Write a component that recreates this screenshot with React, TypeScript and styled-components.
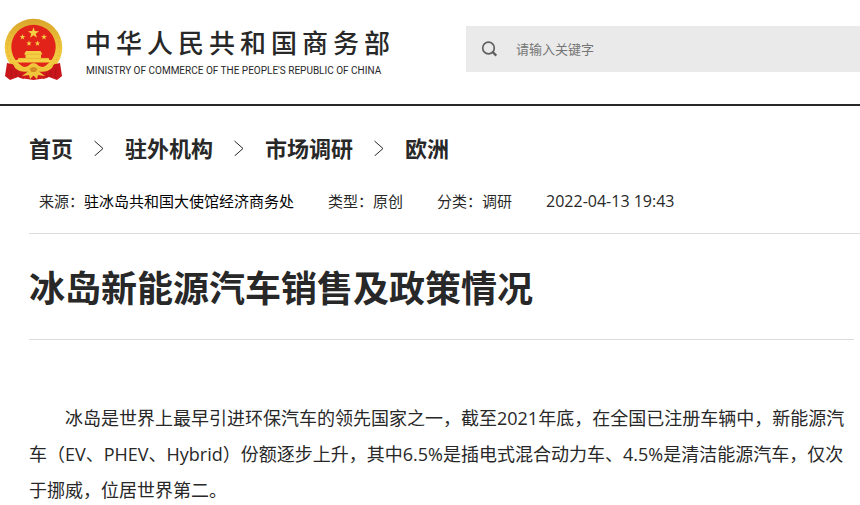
import React from "react";
import styled, { createGlobalStyle } from "styled-components";

const sans = `"Open Sans", "Noto Sans CJK SC", sans-serif`;
const ink = "#282828";

const GlobalStyle = createGlobalStyle`
  * { box-sizing: border-box; }
  body { margin: 0; background: #fff; color: ${ink}; font-family: ${sans}; }
`;

const Page = styled.div`
  overflow: hidden;
`;

const Header = styled.header`
  display: flex;
  align-items: flex-start;
  padding: 18px 0 0 4px;
  height: 106px;
  border-bottom: 2px solid ${ink};
`;

const Brand = styled.a`
  display: flex;
  gap: 19px;
  flex: 0 0 462px;
  color: ${ink};
  text-decoration: none;
`;

const BrandText = styled.span`
  display: flex;
  flex-direction: column;
  padding-top: 4px;
`;

const BrandName = styled.span`
  font: 500 26px/40px "Noto Sans CJK SC", sans-serif;
  letter-spacing: 5px;
  white-space: nowrap;
`;

const BrandSub = styled.span`
  padding-left: 1px;
  font: 10px/18px Roboto, Arial, sans-serif;
  white-space: nowrap;
`;

const Search = styled.form`
  display: flex;
  align-items: center;
  flex: 1;
  margin-top: 8px;
  height: 46px;
  padding-left: 14px;
  background: #eaeaea;
`;

const SearchButton = styled.button`
  display: flex;
  padding: 0;
  border: 0;
  background: none;
  color: #606060;
`;

const SearchInput = styled.input`
  flex: 1;
  min-width: 0;
  margin-left: 16px;
  padding: 0;
  border: 0;
  outline: 0;
  background: none;
  font: 13px/20px ${sans};
  color: ${ink};
  &::placeholder { color: #757575; opacity: 1; }
`;

const Main = styled.main`
  padding-left: 29px;
`;

const Crumbs = styled.nav`
  display: flex;
  align-items: center;
  gap: 20px;
  padding-top: 25px;
`;

const Crumb = styled.a`
  color: ${ink};
  font-size: 22px;
  line-height: 34px;
  font-weight: 700;
  text-decoration: none;
`;

const Meta = styled.div`
  display: flex;
  gap: 34px;
  padding: 24px 0 19px 10px;
  border-bottom: 1px solid #dcdcdc;
  font-size: 15px;
  line-height: 25px;
`;

const Source = styled.span`
  color: #000;
`;

const PublishTime = styled.time`
  font-size: 16px;
`;

const Article = styled.article`
  padding-right: 6px;
`;

const Title = styled.h1`
  margin: 0;
  padding: 28px 0 23px;
  border-bottom: 1px solid #dcdcdc;
  font-size: 36px;
  line-height: 54px;
  font-weight: 700;
`;

const Paragraph = styled.p`
  margin: 60px 0 0;
  font-size: 18px;
  line-height: 36px;
  text-indent: 2em;
`;

const STAR = "M0-1L.235-.324L.951-.309L.38.124L.588.809L0 .4L-.588.809L-.38.124L-.951-.309L-.235-.324Z";

function Emblem() {
  return (
    <svg width="62" height="64" viewBox="0 0 62 64" aria-hidden="true">
      <defs>
        <linearGradient id="gold" x1="0" y1="0" x2="0" y2="1">
          <stop offset="0" stopColor="#d9a62c" />
          <stop offset="0.5" stopColor="#efc53c" />
          <stop offset="1" stopColor="#f3cf45" />
        </linearGradient>
      </defs>
      <circle cx="29.5" cy="29.5" r="28.8" fill="url(#gold)" />
      <circle cx="29.5" cy="29.5" r="26" fill="none" stroke="#dba62c" strokeWidth="1" strokeDasharray="1 3" />
      <circle cx="29.5" cy="29" r="22.2" fill="#e2231a" />
      <g fill="#f5cf43">
        <path d={STAR} transform="translate(29.5 15) scale(5.8)" />
        <path d={STAR} transform="translate(18.5 19) scale(3)" />
        <path d={STAR} transform="translate(40 19) scale(3)" />
        <path d={STAR} transform="translate(25 25.5) scale(2.9)" />
        <path d={STAR} transform="translate(33.5 25.5) scale(2.9)" />
        <path d="M20 36.5L22 33H36.5L38.5 36.5H37V40H44.5L45.5 42H48L46 44.5H13L11 42H13.5L14.5 40H21.5V36.5Z" />
      </g>
      <path d="M15 40.4H44M22.5 36.3H36.5" stroke="#e4ae30" strokeWidth="0.7" />
      <path d="M3 45L12 47L21 54L20 61L14 59L6 62L1 58Z M56 45L47 47L38 54L39 61L45 59L53 62L58 58Z" fill="#c8161b" />
      <path d="M15 53L24 48L29.5 52L35 48L44 53L43 60L29.5 62L16 60Z" fill="#d01b1c" />
      <g fill="#efc53c">
        <path d="M8 44Q17 51 24 48Q29.5 42 35 48Q42 51 51 44L48 50Q42 55 35 53.5L41 58L34 57L33 61L29.5 57.5L26 61L25 57L18 58L24 53.5Q17 55 11 50Z" />
        <circle cx="29.5" cy="51" r="4.5" />
      </g>
      <path d="M25.5 51Q29.5 47 33.5 51L31.5 54H27.5Z" fill="#d58a22" />
      <path d="M7 51L8 60M12 53L12 59M17 55L16 60M52 51L51 60M47 53L47 59M42 55L43 60" stroke="#a81318" strokeWidth="0.7" />
    </svg>
  );
}

function SearchIcon() {
  return (
    <svg width="20" height="20" viewBox="0 0 20 20" fill="none" stroke="currentColor" aria-hidden="true">
      <circle cx="8.5" cy="9" r="5.8" strokeWidth="1.7" />
      <path d="M12.7 13.2L16.3 16.6" strokeWidth="2.3" />
    </svg>
  );
}

function Chevron() {
  return (
    <svg width="12" height="16" viewBox="0 0 12 16" fill="none" stroke={ink} aria-hidden="true">
      <path d="M1.5 1L10 8.5L1.5 16" strokeWidth="1" />
    </svg>
  );
}

const crumbs = ["首页", "驻外机构", "市场调研", "欧洲"];

export default function App() {
  return (
    <Page lang="zh-CN">
      <GlobalStyle />
      <Header>
        <Brand href="#">
          <Emblem />
          <BrandText>
            <BrandName>中华人民共和国商务部</BrandName>
            <BrandSub>MINISTRY OF COMMERCE OF THE PEOPLE'S REPUBLIC OF CHINA</BrandSub>
          </BrandText>
        </Brand>
        <Search role="search">
          <SearchButton type="button" aria-label="搜索">
            <SearchIcon />
          </SearchButton>
          <SearchInput type="text" aria-label="请输入关键字" placeholder="请输入关键字" />
        </Search>
      </Header>
      <Main>
        <Crumbs aria-label="首页">
          {crumbs.map((name, index) => (
            <React.Fragment key={name}>
              {index > 0 && <Chevron />}
              <Crumb href="#">{name}</Crumb>
            </React.Fragment>
          ))}
        </Crumbs>
        <Meta>
          <span>来源：<Source>驻冰岛共和国大使馆经济商务处</Source></span>
          <span>类型：原创</span>
          <span>分类：调研</span>
          <PublishTime dateTime="2022-04-13T19:43">2022-04-13 19:43</PublishTime>
        </Meta>
        <Article>
          <Title>冰岛新能源汽车销售及政策情况</Title>
          <Paragraph>
            冰岛是世界上最早引进环保汽车的领先国家之一，截至2021年底，在全国已注册车辆中，新能源汽车（EV、PHEV、Hybrid）份额逐步上升，其中6.5%是插电式混合动力车、4.5%是清洁能源汽车，仅次于挪威，位居世界第二。
          </Paragraph>
        </Article>
      </Main>
    </Page>
  );
}
